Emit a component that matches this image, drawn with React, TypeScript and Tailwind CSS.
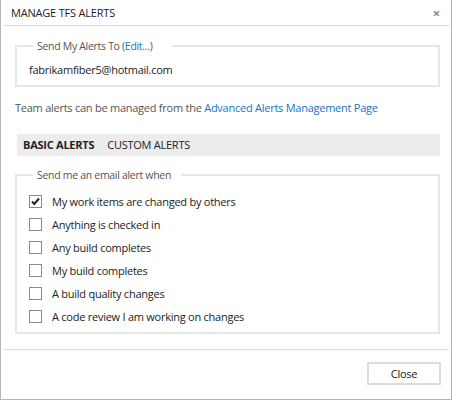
import { useState } from "react";

const alerts = [
  "My work items are changed by others",
  "Anything is checked in",
  "Any build completes",
  "My build completes",
  "A build quality changes",
  "A code review I am working on changes",
];

function CheckBox({ checked, onClick }: { checked: boolean; onClick: () => void }) {
  return (
    <button
      type="button"
      onClick={onClick}
      className="flex h-[13px] w-[13px] shrink-0 items-center justify-center border border-[#8a8a8a] bg-white"
    >
      {checked ? (
        <svg width="11" height="11" viewBox="0 0 11 11">
          <path d="M2 5.5 L4.3 8 L9 2.5" fill="none" stroke="#222" strokeWidth="2" />
        </svg>
      ) : null}
    </button>
  );
}

export default function App() {
  const [checked, setChecked] = useState<boolean[]>([true, false, false, false, false, false]);

  return (
    <div className="flex h-[400px] w-[452px] flex-col border-x border-b border-[#b5b5b5] bg-white font-['Open_Sans',sans-serif] text-[11px] leading-[16px] tracking-[-0.25px] text-[#222]">
      <div className="flex h-[25px] items-center justify-between pl-[10px] pr-[11px]">
        <span className="text-[11px] tracking-[-0.2px]">MANAGE TFS ALERTS</span>
        <span className="text-[13px] font-bold text-[#888]">×</span>
      </div>
      <div className="mx-[2px] h-px bg-[#dadada]" />

      <div className="flex flex-1 flex-col pl-[14px] pr-[11px]">
        <fieldset className="mt-[12px] border-2 border-[#e6e6e6] pb-[7px] pl-[12px] pt-[8px]">
          <legend className="ml-[4px] pl-[4px] pr-[20px] text-[10.5px] tracking-[-0.3px] text-[#555]">
            Send My Alerts To (<span className="text-[#1a73c4]">Edit...</span>)
          </legend>
          <p>fabrikamfiber5@hotmail.com</p>
        </fieldset>

        <p className="mt-[13px] text-[#555]">
          Team alerts can be managed from the{" "}
          <span className="text-[#1a73c4]">Advanced Alerts Management Page</span>
        </p>

        <div className="ml-[2px] mt-[18px] flex h-[22px] items-center gap-[13px] bg-[#ececec] px-[6px]">
          <span className="font-bold">BASIC ALERTS</span>
          <span>CUSTOM ALERTS</span>
        </div>

        <fieldset className="mt-[11px] border-2 border-[#e6e6e6] pb-[4px] pl-[12px] pt-[7px]">
          <legend className="ml-[4px] pl-[4px] pr-[10px] text-[10.5px] tracking-[-0.3px] text-[#555]">
            Send me an email alert when
          </legend>
          {alerts.map((label, i) => (
            <div key={label} className="flex h-[23px] items-center gap-[10px]">
              <CheckBox
                checked={checked[i]}
                onClick={() => setChecked((c) => c.map((v, j) => (j === i ? !v : v)))}
              />
              <span>{label}</span>
            </div>
          ))}
        </fieldset>
      </div>

      <div className="mx-[2px] h-px bg-[#dadada]" />
      <div className="flex h-[49px] items-start justify-end pr-[10px] pt-[12px]">
        <button className="h-[23px] w-[74px] border-2 border-[#dcdcdc] bg-white text-[#222]">Close</button>
      </div>
    </div>
  );
}
